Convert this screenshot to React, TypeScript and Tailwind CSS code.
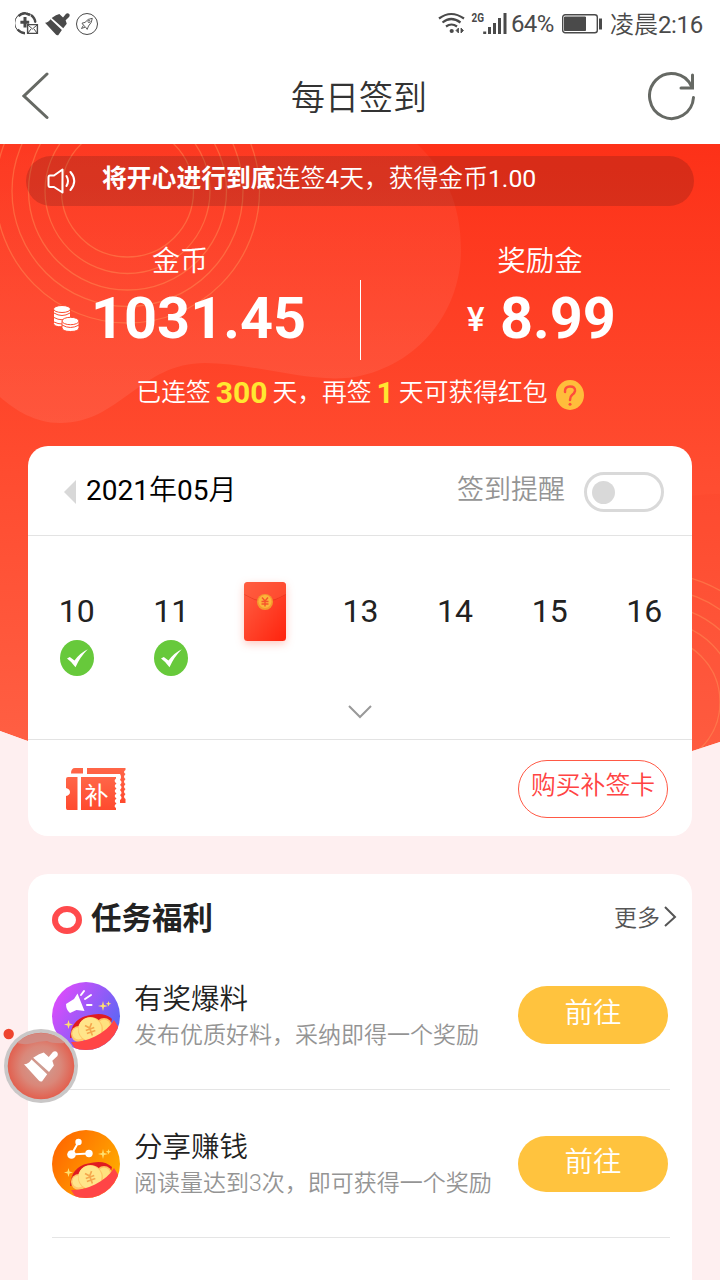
import type { ReactNode } from 'react'

type Task = { title: string; desc: string; icon: ReactNode; button: string }

const DAYS = [
  { day: '10', state: 'checked' },
  { day: '11', state: 'checked' },
  { day: '12', state: 'packet' },
  { day: '13', state: '' },
  { day: '14', state: '' },
  { day: '15', state: '' },
  { day: '16', state: '' },
]

const TASKS: Task[] = [
  { title: '有奖爆料', desc: '发布优质好料，采纳即得一个奖励', icon: <TipIcon />, button: 'mt-5 h-[58px]' },
  { title: '分享赚钱', desc: '阅读量达到3次，即可获得一个奖励', icon: <ShareIcon />, button: 'mt-[22px] h-14' },
]

function Brush() {
  return (
    <>
      <path d="M10.5 2.2 13.8 1 17.3 4.2 20.2.7Q22 -.5 23.4 1.2Q24.2 3 22.6 4.2L19.8 6.8 20.9 10.2 17.5 14.7 6.4 4.8Z" />
      <path d="M0 9.3Q3 9.4 5.3 6L16.2 16.2 12.7 21.2Q11.3 21.8 10.2 20.4Z" />
    </>
  )
}

function StatusBar() {
  return (
    <div className="flex h-12 items-center justify-between pr-[17px] pl-[15px] text-[#4a4a4a]">
      <div className="flex items-center gap-2">
        <svg width="24" height="24" viewBox="0 0 24 24" fill="none" stroke="currentColor">
          <path d="M10 .8A10.3 10.3 0 0 0 10 21.4M12 1A10.3 10.3 0 0 1 20.4 11" />
          <path d="M3.5 4.2Q6 1.4 10 1.2L15 3M2.6 17.5Q6 21.2 10 21.2M16 3Q20 6 20.3 10.3" strokeWidth="2.4" />
          <path d="M10 5v10.5M5.4 10.2h8.8" strokeWidth="3" />
          <path d="M12.6 12.6h9.8v8.8h-9.8z" fill="white" strokeWidth="1.4" />
          <path d="m13 13 4.5 4 4.5-4M13 21l3-4m6 4-3-4" />
        </svg>
        <svg className="-mr-0.5 -ml-0.5" width="25" height="23" viewBox="0 0 24 22" fill="currentColor"><Brush /></svg>
        <svg width="22" height="22" viewBox="0 0 22 22" fill="none" stroke="currentColor">
          <circle cx="11" cy="11" r="10.5" />
          <path d="M16.3 5.3Q11.8 5.5 9 9.4L6 10.2 7.3 12 9.7 14.2 11.2 16.4 12.5 13Q16 9.7 16.3 5.3ZM7.4 12.4 5.5 15.5 9 14.2" strokeWidth=".9" />
          <circle cx="13" cy="8.5" r="1.1" strokeWidth=".8" />
        </svg>
      </div>
      <div className="flex items-center text-[24px]">
        <svg width="74" height="26" viewBox="0 0 74 26" fill="none" stroke="currentColor">
          <path d="M2 7.5Q14 -1.5 27 7.5M5.5 11.5Q14 4.5 23.5 11.5M9 15.5Q14.5 11.5 20 15.5" strokeWidth="2.2" />
          <circle cx="14.7" cy="20" r="2.1" fill="currentColor" stroke="none" />
          <path d="m21.500 17-2.500 2.500 2.500 2.500zM24 17l2.500 2.500L24 22z" fill="currentColor" strokeWidth=".8" />
          <path d="M47.700 23v-2.500M52.500 23v-7M57.500 23V12M62.500 23V7M68 23V2" strokeWidth="3" />
          <text x="34.500" y="10.500" fontSize="12" fontWeight="700" fontFamily="Roboto, sans-serif" textLength="12.500" lengthAdjust="spacingAndGlyphs" fill="currentColor" stroke="none">2G</text>
        </svg>
        <span className="w-[43px] whitespace-nowrap -tracking-[0.6px]">64%</span>
        <svg className="mr-[7px] ml-2" width="41" height="20" viewBox="0 0 41 20" fill="none" stroke="currentColor">
          <rect x=".7" y=".7" width="34.600" height="18" rx="2.500" strokeWidth="1.400" />
          <path d="M2.500 3h21v13.500h-21z" fill="currentColor" />
          <path d="M38.500 4.500v11" strokeWidth="3" />
        </svg>
        <span className="pt-0.5 font-[350] whitespace-nowrap">凌晨<span className="font-normal -tracking-[0.3px]">2:16</span></span>
      </div>
    </div>
  )
}

function Backdrop() {
  return (
    <svg className="absolute top-0 left-0" width="720" height="640" viewBox="0 144 720 640" fill="none">
      <defs>
        <linearGradient id="red" x1="0" y1="0" x2="0" y2="1">
          <stop stopColor="#fd3118" />
          <stop offset="0.480" stopColor="#ff4b2f" />
          <stop offset="1" stopColor="#ff6347" />
        </linearGradient>
        <linearGradient id="blob" x1="0" y1="0" x2="0" y2="1">
          <stop stopColor="#fff" stopOpacity="0.040" />
          <stop offset="1" stopColor="#fff" stopOpacity="0.080" />
        </linearGradient>
      </defs>
      <path d="M0 144H720V742Q360 866 0 731Z" fill="url(#red)" />
      <path d="M0 144H417C445 170 461 205 461 250C461 310 420 365 355 377C310 384 255 363 205 363C140 363 120 423 60 423C35 423 15 410 0 397Z" fill="url(#blob)" />
      <path d="M680 498Q700 494 720 494V742L680 760Z" fill="#f03018" fillOpacity="0.080" />
      <g stroke="#ffa060" strokeOpacity="0.400" strokeWidth="1.300">
        {[66, 82.5, 99, 115.5, 132].map((r) => <circle key={r} cx="127.500" cy="191" r={r} />)}
        {[65, 81, 97, 113, 129].map((r) => <circle key={r} cx="655" cy="702" r={r} />)}
      </g>
      <path d="M0 731Q360 866 720 742V784H0Z" fill="#feeff0" />
    </svg>
  )
}

function Check() {
  return (
    <svg width="34" height="36" viewBox="0 0 34 36">
      <ellipse cx="17" cy="18" rx="17" ry="18" fill="#67c93b" />
      <path d="M7 18.500 9.800 17 14.500 20.500Q20 13 27.800 9.300Q20 17 15.500 27.300Q12 22 7 18.500Z" fill="white" />
    </svg>
  )
}

function RedPacket() {
  return (
    <svg className="mr-0.5 drop-shadow-[0_3px_4px_rgba(255,80,50,0.3)]" width="42" height="59" viewBox="0 0 42 59">
      <defs>
        <linearGradient id="packet" x1="0" y1="0" x2="1" y2="1">
          <stop stopColor="#ff6145" />
          <stop offset="1" stopColor="#ff230d" />
        </linearGradient>
      </defs>
      <rect width="42" height="59" rx="3.500" fill="url(#packet)" />
      <path d="M.5 12.500Q21 26 41.500 12.500" fill="none" stroke="#d92d18" strokeOpacity="0.500" />
      <path d="M0 4Q0 0 4 0H38Q42 0 42 4V12Q21 25 0 12Z" fill="#ff5b3c" fillOpacity="0.450" />
      <circle cx="21" cy="20" r="8" fill="#f49a2e" />
      <circle cx="21" cy="19.500" r="6.500" fill="#fdb53b" />
      <path d="m18 15.500 3 3.500 3-3.500M17.500 19.500h7M17.500 22h7M21 19v5.500" stroke="#f6542c" strokeWidth="1.400" fill="none" />
    </svg>
  )
}

function TicketIcon() {
  return (
    <svg width="60" height="43" viewBox="0 0 60 43">
      <defs>
        <linearGradient id="ticket" x1="0" y1="0" x2="0" y2="1">
          <stop stopColor="#ff6648" />
          <stop offset="1" stopColor="#ff4a2e" />
        </linearGradient>
      </defs>
      <path d="M5 5.500Q5 0 9 0H17V5.500ZM21 0H59.500V2Q56.500 4 59.500 6Q56.500 9 59.500 11Q56.500 14 59.500 16Q56.500 19 59.500 21Q56.500 24 59.500 26Q56.500 29 59.500 31V35H54V32Q57 30 54 27Q57 25 54 22Q57 19 54 17Q57 14 54 12Q56 9 54 6H21Z" fill="url(#ticket)" />
      <path d="M0 11Q0 9 2 9H11.500V42H1.500Q0 42 0 40V28Q4 27 4 24Q4 21 0 20ZM15 9H50V10.500Q47 13 50.500 15.500Q47 18 50.500 20.500Q47 23 50.500 25.500Q47 28 50.500 30.500Q47 33 50.500 35.500Q47 38 50 40V42H15Z" fill="url(#ticket)" />
      <text x="18.500" y="35.500" fontSize="24" fontWeight="400" fontFamily="'Noto Sans CJK SC', sans-serif" fill="white">补</text>
    </svg>
  )
}

// gold coins in a red purse, shared by both task icons
function CoinPurse() {
  return (
    <>
      <path d="M18 56Q19 37 36 33.500Q52 29 60 37L58 45Z" fill="#e01b20" />
      <circle cx="27" cy="52" r="8" fill="#ffc76b" />
      <circle cx="52" cy="44" r="8" fill="#ffbf62" />
      <circle cx="26.500" cy="51.500" r="6" fill="#ffe48c" />
      <circle cx="52" cy="43.500" r="6" fill="#ffe17e" />
      <circle cx="38.500" cy="47.500" r="12.500" fill="#ffc565" />
      <circle cx="38" cy="47" r="11.500" fill="#ffe58a" />
      <g transform="translate(38 47) rotate(-20)" fill="none" stroke="#f5a74d" strokeWidth="1.600">
        <path d="m-3.500-5 3.500 4 3.500-4M-4.500 0h9M-4.500 3.200h9M0-1v8" />
      </g>
      <path d="M19 60Q32 60 43 54.500Q56 48 62 38Q66 43 68 50L60 68H24Z" fill="#ff4546" />
      <path d="m16.500 38 1 3.500 3.500 1-3.500 1-1 3.500-1-3.500-3.500-1 3.500-1zM51 19l1 4 4 1-4 1-1 4-1-4-4-1 4-1zM56.500 19l.7 2 2 .700-2 .700-.7 2-.7-2-2-.700 2-.700z" fill="#ffe16f" />
    </>
  )
}

function TipIcon() {
  return (
    <svg width="68" height="68" viewBox="0 0 68 68">
      <defs>
        <linearGradient id="tip" x1="0" y1="0" x2="1" y2="0.600">
          <stop offset="0.100" stopColor="#e04bfc" />
          <stop offset="1" stopColor="#5b67f4" />
        </linearGradient>
        <clipPath id="tipClip"><circle cx="34" cy="34" r="34" /></clipPath>
      </defs>
      <g clipPath="url(#tipClip)">
        <path d="M0 0h68v68H0z" fill="url(#tip)" />
        <path d="M14 22 22 17 25.500 11.500 32.500 29 24.500 28 18 31Q14 28 14 22Z" fill="white" />
        <path d="m29 13 3-4M33 17l6-4M35 23h4.500" stroke="white" strokeWidth="2" strokeLinecap="round" />
        <CoinPurse />
      </g>
    </svg>
  )
}

function ShareIcon() {
  return (
    <svg width="68" height="68" viewBox="0 0 68 68">
      <defs>
        <linearGradient id="share" x1="0" y1="0" x2="1" y2="0.600">
          <stop stopColor="#ff5f00" />
          <stop offset="1" stopColor="#ffaa00" />
        </linearGradient>
        <clipPath id="shareClip"><circle cx="34" cy="34" r="34" /></clipPath>
      </defs>
      <g clipPath="url(#shareClip)">
        <path d="M0 0h68v68H0z" fill="url(#share)" />
        <path d="M26.500 12 19.500 24.500 37 23.500" stroke="white" strokeWidth="2" fill="none" />
        <circle cx="26.500" cy="12" r="3.200" fill="white" />
        <circle cx="19.500" cy="24.500" r="4.300" fill="white" />
        <circle cx="37" cy="23.500" r="3.700" fill="white" />
        <CoinPurse />
      </g>
    </svg>
  )
}

function Notice() {
  return (
    <div className="mx-[26px] flex h-[50px] rounded-full bg-[#461414]/20 pl-[21px] text-[24.800px] leading-[45px]">
      <svg className="mt-3 mr-[25px]" width="30" height="26" viewBox="0 0 30 26" fill="none" stroke="white" strokeWidth="2">
        <path d="M3 7.500H7L15.500 1.500V24.500L7 19H3Q1.500 19 1.500 17V9.500Q1.500 7.500 3 7.500Z" strokeLinejoin="round" />
        <path d="M19.500 8Q22.500 13 19.500 18M23.500 4Q31 13 23.500 22" strokeLinecap="round" />
      </svg>
      <p className="font-[350]">
        <b className="font-bold">将开心进行到底</b>连签<span className="font-normal">4</span>天，获得金币<span className="font-normal">1.00</span>
      </p>
    </div>
  )
}

function Balances() {
  return (
    <div className="mt-[35px] flex">
      <div className="w-[360px] text-center">
        <h2 className="pt-0.5 text-[28px] leading-[38px] font-[350]">金币</h2>
        <div className="-mt-0.5 flex pl-[53px]">
          <svg className="mt-[26px] mr-[11px]" width="27" height="27" viewBox="0 0 27 27">
            <g fill="white" stroke="#fd4b2f">
              <path d="M.5 4v14.500Q1 22 9 21.800Q17 22 17.500 18V4Z" />
              <ellipse cx="9" cy="4" rx="8.500" ry="3.500" />
              <path d="M1 8Q9 13 17 8M1 12.500Q9 17 17 12.500M1 17Q9 21 17 17" fill="none" />
              <path d="M9 16.500V22.500Q9 26.500 17.500 26.500Q26 26.500 26 22.500V16.500Z" />
              <ellipse cx="17.500" cy="16" rx="8.500" ry="3.700" />
              <path d="M9 20Q17.500 25 26 20" fill="none" />
            </g>
          </svg>
          <strong className="text-[57.600px] leading-[80px]">1031.45</strong>
        </div>
      </div>
      <div className="mt-[39px] -mr-px h-20 w-px bg-white" />
      <div className="w-[360px] text-center">
        <h2 className="pt-0.5 text-[28.500px] leading-[38px] font-[350]">奖励金</h2>
        <div className="-mt-0.5 flex pl-[107px]">
          <span className="w-[33px] text-left text-[33px] leading-[82px] font-medium">¥</span>
          <strong className="text-[57.600px] leading-[80px]">8.99</strong>
        </div>
      </div>
    </div>
  )
}

function Calendar() {
  return (
    <section className="mx-7 mt-[30px] h-[390px] rounded-[20px] bg-white">
      <div className="flex h-[90px] border-b border-[#e3e3e3] pt-[26px] pr-7 pl-9">
        <svg className="mt-2" width="12" height="24" viewBox="0 0 12 24"><path d="M12 0V24L0 12Z" fill="#d8d8d8" /></svg>
        <span className="ml-2.5 text-[28px] leading-[37px] font-[350] text-black">
          <span className="font-normal">2021</span>年<span className="font-normal">05</span>月
        </span>
        <span className="ml-auto text-[27px] leading-[36px] font-[350] text-[#949494]">签到提醒</span>
        <div className="ml-[19px] h-10 w-20 rounded-full border-[3px] border-[#d9d9d9] p-[5px] pt-[5.500px]">
          <div className="size-[23px] rounded-full bg-[#d9d9d9]" />
        </div>
      </div>
      <div className="h-[204px] border-b border-[#e3e3e3] px-px pt-[46px]">
        <div className="grid h-[118px] grid-cols-7 text-center text-[32px] leading-[58px]">
          {DAYS.map((d) => (
            <div key={d.day} className="flex flex-col items-center pl-px">
              {d.state === 'packet' ? <RedPacket /> : <span>{d.day}</span>}
              {d.state === 'checked' && <Check />}
            </div>
          ))}
        </div>
        <svg className="mx-auto mt-1" width="24" height="15" viewBox="0 0 24 15" fill="none" stroke="#999" strokeWidth="2"><path d="m1 2 11 11L23 2" /></svg>
      </div>
      <div className="flex h-24 justify-between pt-5 pr-6 pl-[38px]">
        <div className="pt-2"><TicketIcon /></div>
        <button className="h-[58px] w-[150px] rounded-full border border-[#ff5945] pb-1.5 text-[24.800px] leading-9 font-[350] text-[#ff4343]">购买补签卡</button>
      </div>
    </section>
  )
}

function Tasks() {
  return (
    <section className="mx-7 mt-[38px] h-[420px] rounded-t-[20px] bg-white pt-4 pr-[22px] pl-6">
      <div className="flex h-[76px]">
        <div className="mt-4 h-7 w-[30px] rounded-[50%] border-[6px] border-[#ff4a4c]" />
        <h2 className="ml-[9px] text-[30.500px] leading-[57px] font-bold">任务福利</h2>
        <a className="ml-auto text-[23px] leading-[58px] font-[350] text-[#555]">更多</a>
        <svg className="mt-4 -mr-[7px] ml-1" width="13" height="22" viewBox="0 0 13 22" fill="none" stroke="#555" strokeWidth="2"><path d="m1 1 10 10L1 20" /></svg>
      </div>
      {TASKS.map((t) => (
        <div key={t.title} className="mb-6 flex h-[124px] border-b border-[#e5e5e5]">
          <div className="mt-4">{t.icon}</div>
          <div className="ml-3.5 pt-3.5">
            <h3 className="text-[28.500px] leading-[40px] font-[350]">{t.title}</h3>
            <p className="text-[23px] leading-[32px] font-[350] text-[#949494]">{t.desc}</p>
          </div>
          <button className={`mr-0.5 ml-auto w-[150px] rounded-full bg-[#ffc33e] pb-0.5 text-[28.500px] leading-[46px] font-[350] text-white ${t.button}`}>前往</button>
        </div>
      ))}
    </section>
  )
}

function FloatingCleaner() {
  return (
    <svg className="absolute top-[1025px] left-0" width="80" height="82" viewBox="0 0 80 82">
      <defs>
        <radialGradient id="cleaner">
          <stop stopColor="#cda096" />
          <stop offset="0.600" stopColor="#da8779" />
          <stop offset="1" stopColor="#e2604f" />
        </radialGradient>
      </defs>
      <circle cx="8.700" cy="9" r="5.200" fill="#ee442e" />
      <circle cx="41" cy="41" r="37" fill="#c9c7c7" />
      <circle cx="41" cy="41" r="33.300" fill="url(#cleaner)" />
      <path d="M17 18Q27 8 41 8Q56 8 65 18Q53 19 47 16Q39 16 31 18.500Q24 20 17 18Z" fill="#cf8f88" fillOpacity="0.850" />
      <g transform="translate(24 26) scale(1.430)" fill="white"><Brush /></g>
    </svg>
  )
}

export default function App() {
  return (
    <div className="relative h-[1280px] w-[720px] overflow-hidden bg-[#feeff0] font-[Roboto,'Noto_Sans_CJK_SC',sans-serif] text-[#222]">
      <div className="bg-white">
        <StatusBar />
        <header className="flex h-24 items-center justify-between pr-6 pl-[22px]">
          <svg width="48" height="48" viewBox="0 0 48 48" fill="none" stroke="#666964" strokeWidth="3" strokeLinecap="round"><path d="M25 2 2 24 25 45.500" /></svg>
          <h1 className="pt-1 text-[34px] font-[350] text-[#333]">每日签到</h1>
          <svg width="48" height="50" viewBox="0 0 48 50" fill="none" stroke="#666964" strokeWidth="3" strokeLinecap="round">
            <path d="M45.500 26.500A22 22.500 0 1 1 43.500 15.500" />
            <path d="M44.500 4V17H33" />
          </svg>
        </header>
      </div>
      <main className="relative">
        <Backdrop />
        <div className="relative pt-3 text-white">
          <Notice />
          <Balances />
          <div className="mt-3 flex h-[43px] justify-center text-[24.800px] leading-[40px] font-[350]">
            <span>已连签</span>
            <b className="mx-[5px] text-[30px] font-bold text-[#ffe731]">300</b>
            <span>天，再签</span>
            <b className="mx-[5px] text-[30px] font-bold text-[#ffe731]">1</b>
            <span>天可获得红包</span>
            <svg className="mt-[7px] ml-2" width="28" height="30" viewBox="0 0 28 30">
              <ellipse cx="14" cy="15" rx="14" ry="15" fill="#ffbd3b" />
              <path d="M9 12Q8.500 6.500 14 6.500Q19.500 6.500 19 11Q18.500 13.500 16 15Q14 16.500 14 20" fill="none" stroke="#ff4d3b" strokeWidth="2.500" strokeLinecap="round" />
              <circle cx="14" cy="24.300" r="1.500" fill="#ff4d3b" />
            </svg>
          </div>
        </div>
        <div className="relative">
          <Calendar />
          <Tasks />
        </div>
      </main>
      <FloatingCleaner />
    </div>
  )
}
